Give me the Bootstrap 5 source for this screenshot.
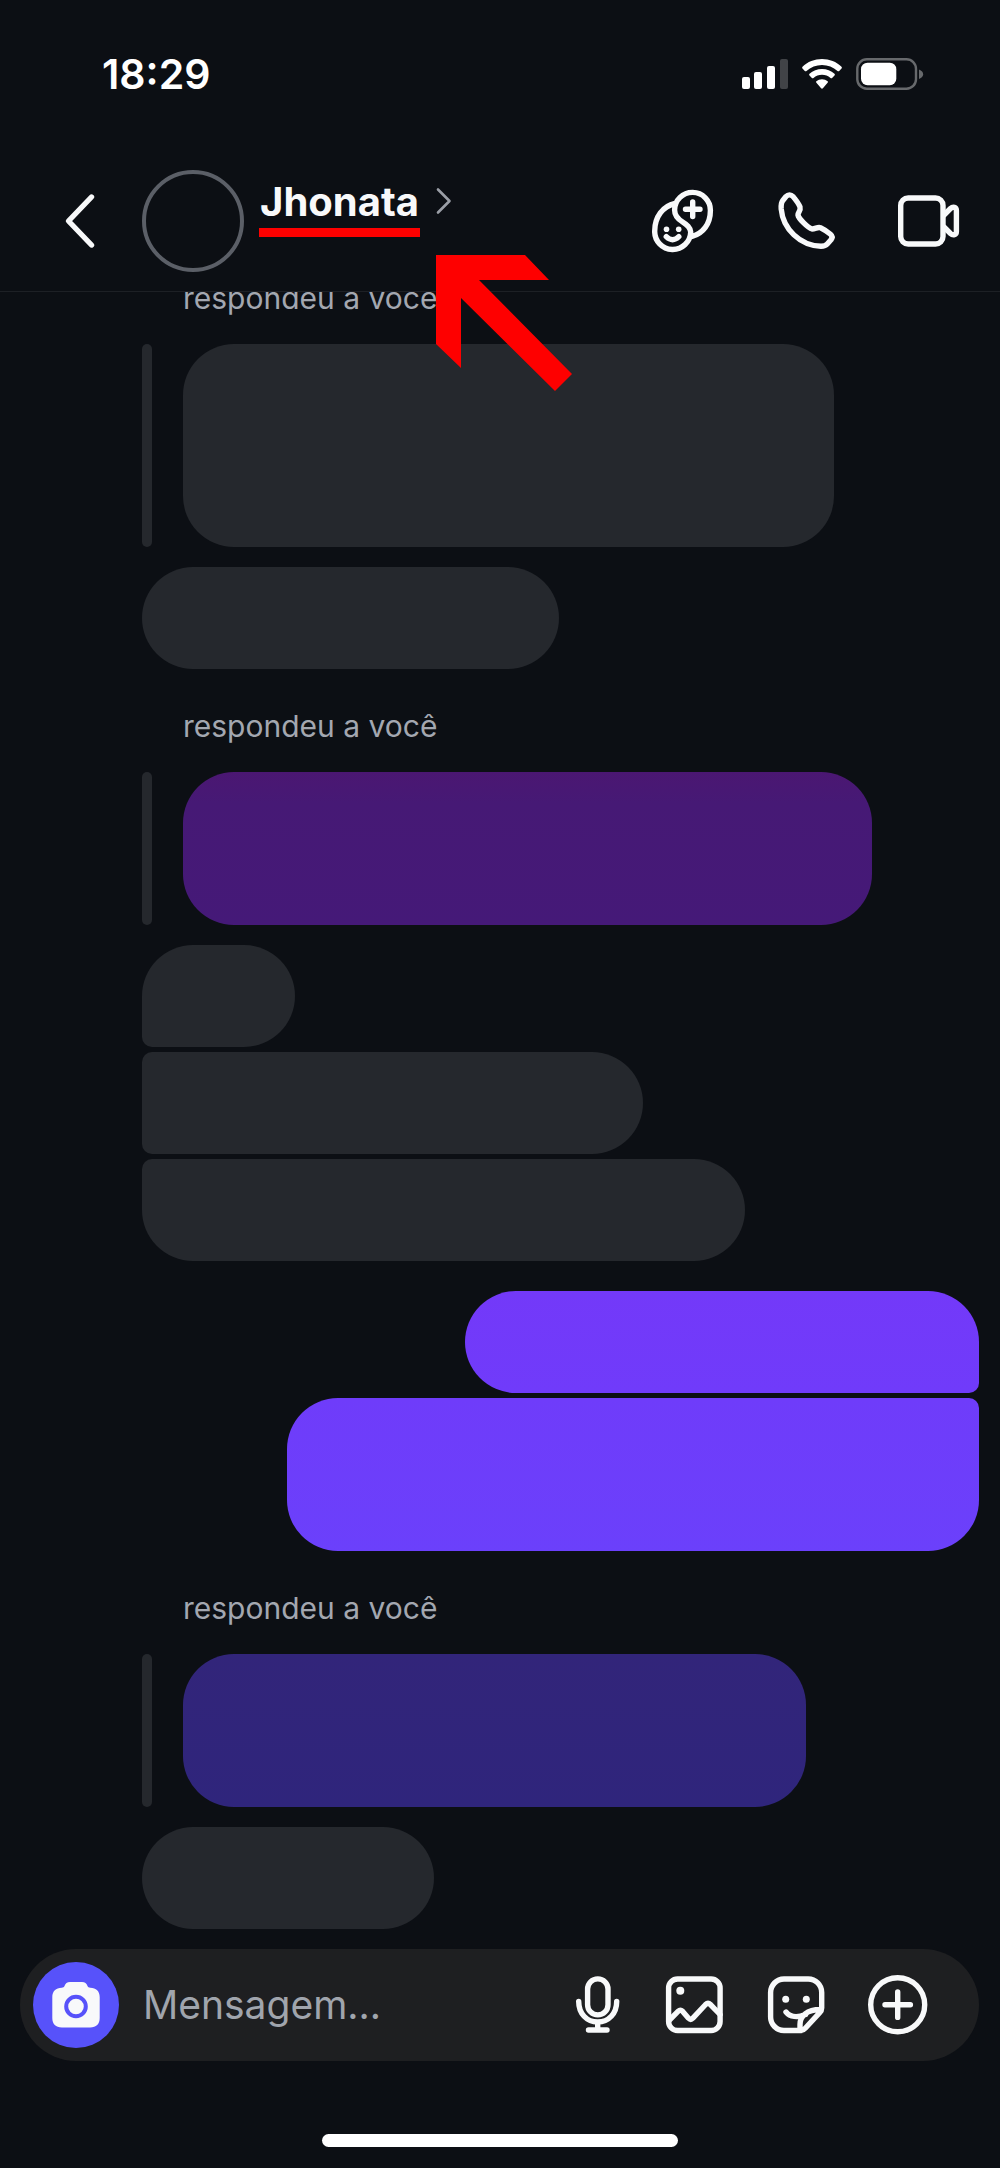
<!DOCTYPE html>
<html lang="pt-BR">
<head>
<meta charset="utf-8">
<meta name="viewport" content="width=device-width, initial-scale=1">
<title>Jhonata</title>
<link href="https://cdn.jsdelivr.net/npm/bootstrap@5.3.0/dist/css/bootstrap.min.css" rel="stylesheet">
<style>
  body { background: #0c0f14; color: #f8f9fa; font-family: Inter, "Liberation Sans", sans-serif; }
  svg { display: block; flex: none; fill: none; stroke: currentColor; stroke-width: 5.4; stroke-linecap: round; stroke-linejoin: round; }
  .solid { fill: currentColor; stroke: none; }
  .btn { --bs-btn-color: #f8f9fa; --bs-btn-hover-color: #fff; --bs-btn-active-color: #fff; }

  .status-bar { height: 150px; padding: 0 76px 2px 102px; }
  .clock { font-size: 41px; line-height: 48px; font-weight: 600; color: #fff; }
  .status-icons { gap: 14px; color: #fff; }

  .chat-header { height: 142px; padding: 0 40px 0 60px; border-bottom: 1px solid #1d2025; z-index: 2; }
  .back-btn { margin-right: 42px; }
  .avatar { width: 102px; height: 102px; border: 4px solid #5b5f67; margin-right: 15px; }
  .contact { padding-bottom: 27px; gap: 16px; color: #f8f9fa; }
  .contact-name { font-size: 40px; line-height: 48px; font-weight: 700; padding: 0 1px 2px; border-bottom: 9px solid #fe0000; }
  .contact svg { color: #9a9ea6; stroke-width: 2.6; margin-bottom: 13px; }
  .call-actions { gap: 58px; }
  .pointer-arrow { left: 436px; top: 105px; color: #fe0000; pointer-events: none; }

  .chat { padding: 0 21px 20px 142px; min-height: 0; }
  .label-reply { padding-left: 41px; margin: 35px 0 24px; font-size: 30px; line-height: 44px; color: #a3a7b0; }
  .quote { gap: 31px; margin-bottom: 20px; }
  .quote::before { content: ""; width: 10px; border-radius: 5px; background: #25282d; }
  .bubble { height: 102px; max-width: 100%; border-radius: 51px; background: #25282d; flex: none; }
  .two-lines { height: 153px; }
  .three-lines { height: 203px; }
  .stack { gap: 5px; }
  .stack .bubble:not(:last-child) { border-bottom-left-radius: 10px; }
  .stack .bubble:not(:first-child) { border-top-left-radius: 10px; }
  .stack.sent { margin-top: 30px; }
  .sent .bubble:not(:last-child) { border-bottom-left-radius: 51px; border-bottom-right-radius: 10px; background: linear-gradient(#7339f9, #703bfa); }
  .sent .bubble:not(:first-child) { border-top-left-radius: 51px; border-top-right-radius: 10px; background: linear-gradient(#6f3cfa, #6b40fb); }
  .quoted-violet { background: linear-gradient(#4b1772, #461975 20%, #451978); }
  .quoted-indigo { background: linear-gradient(#32257a, #2f257c); }

  .composer { height: 112px; margin: 0 21px 0 20px; padding: 0 51px 0 13px; border-radius: 56px; background: #1e1f21; }
  .camera-btn { width: 86px; height: 86px; background: #5752fa; margin-right: 24px; }
  .camera-btn:hover { background: #5752fa; }
  .camera-btn .ring { fill: none; stroke: #5752fa; stroke-width: 4; }
  .message-box { min-width: 0; font-size: 39px; line-height: 48px; color: #f8f9fa; background: none; }
  .message-box::placeholder { color: #a0a5ad; opacity: 1; }
  .tools { gap: 42px; }
  .home-area { height: 107px; padding-bottom: 21px; }
  .home-pill { width: 356px; height: 13px; background: #fff; }
</style>
</head>
<body>
<div class="d-flex flex-column vh-100 overflow-hidden">
  <div class="status-bar d-flex align-items-center justify-content-between flex-shrink-0">
    <span class="clock">18:29</span>
    <div class="status-icons d-flex align-items-center">
      <svg width="46" height="32" viewBox="0 0 46 32" role="img" aria-label="Sinal">
        <g class="solid"><rect y="19" width="8" height="12" rx="2"/><rect x="12" y="14" width="8" height="17" rx="2"/><rect x="25" y="8" width="8" height="23" rx="2"/><rect x="38" y="1" width="8" height="30" rx="2" opacity=".22"/></g>
      </svg>
      <svg width="40" height="32" viewBox="0 0 40 32" role="img" aria-label="Wi-Fi">
        <g class="solid"><path d="M20 1C12.600 1 5.500 3.800.500 8.700c-.500.500-.500 1.300 0 1.800l2.300 2.400c.500.500 1.200.500 1.700 0C8.700 9 14.200 6.900 20 6.900S31.300 9 35.500 12.900c.500.500 1.200.500 1.700 0l2.300-2.400c.500-.500.500-1.300 0-1.800C34.500 3.800 27.400 1 20 1z"/><path d="M20 11c-4.700 0-9.100 1.700-12.500 4.800-.500.500-.500 1.200 0 1.700l2.400 2.400c.400.400 1.100.500 1.600 0 2.400-2.100 5.300-3.200 8.500-3.200s6.100 1.100 8.500 3.200c.500.500 1.200.400 1.600 0l2.400-2.400c.500-.500.500-1.200 0-1.700C29.100 12.700 24.700 11 20 11z"/><path d="M20 21.200c-2.100 0-4.100.700-5.600 2-.500.400-.500 1 0 1.500l4.700 5.600c.5.600 1.300.6 1.800 0l4.700-5.600c.5-.500.500-1.100 0-1.500-1.500-1.300-3.500-2-5.600-2z"/></g>
      </svg>
      <svg width="68" height="32" viewBox="0 0 68 32" role="img" aria-label="Bateria">
        <rect x="1.300" y="1.300" width="58.700" height="29.400" rx="9.500" style="stroke:#67696c;stroke-width:2.4"/>
        <rect class="solid" x="5" y="4.700" width="35.300" height="22.500" rx="6.500"/>
        <path d="M63 11.500c5.500 2 5.500 7.500 0 9.500z" fill="#67696c" stroke="none"/>
      </svg>
    </div>
  </div>

  <header class="chat-header position-relative d-flex align-items-center flex-shrink-0">
    <button type="button" class="back-btn btn p-0 border-0" aria-label="Voltar">
      <svg width="40" height="56" viewBox="0 0 40 56"><path d="M31.500 4L8.500 28l23 24"/></svg>
    </button>
    <span class="avatar rounded-circle flex-shrink-0"></span>
    <a href="#" class="contact d-flex align-items-center text-decoration-none">
      <span class="contact-name">Jhonata</span>
      <svg width="16" height="28" viewBox="0 0 16 28" aria-hidden="true"><path d="M2 2.500L13.500 14 2 25.500"/></svg>
    </a>
    <div class="call-actions d-flex ms-auto">
      <button type="button" class="btn p-0 border-0" aria-label="Adicionar pessoas">
        <svg width="64" height="64" viewBox="0 0 64 64"><path d="M23 14.500C11 17 2.700 28 2.700 42a18 18 0 0 0 36 1C38.200 38 35 35.800 31 33.300 25.500 30 22.600 26.500 22.600 21a17.900 17.900 0 0 1 35.800.5C58.400 35 51 44.500 40 47.500M40.700 13v14.500M33.500 20.300H48M14.300 47.700c4 4 8.500 4 12.500 0"/><g class="solid"><circle cx="14.500" cy="40.300" r="2.800"/><circle cx="26.700" cy="40.300" r="2.800"/></g></svg>
      </button>
      <button type="button" class="btn p-0 border-0" aria-label="Ligar">
        <svg width="64" height="64" viewBox="0 0 64 64"><path d="M12 7.500L8.800 11.500C7 13.800 7 17 7.200 20 9 40 26 56.500 47 57.300c3 0 5-.8 6.500-2.500l3.500-4c1.500-2 1.300-4-.5-5.500-3.500-2.900-6.500-5-10-6.600-3-1-5 1.300-8.500 1.300C34 39 24.500 29.500 24 26c0-3.500 3-4 2-8-1.500-4-4.500-7.500-7-10.500-2-2.200-5-2.200-7 0z"/></svg>
      </button>
      <button type="button" class="btn p-0 border-0" aria-label="Chamada de vídeo">
        <svg width="64" height="64" viewBox="0 0 64 64"><rect x="4.700" y="9" width="42.300" height="46" rx="7.500"/><path d="M48 26l6.500-6.500c2.500-2.300 5.900-1.500 5.900 2v21c0 3.500-3.400 4.300-5.900 2L48 38"/></svg>
      </button>
    </div>
    <svg class="pointer-arrow position-absolute" width="136" height="136" viewBox="0 0 136 136" aria-hidden="true"><path class="solid" d="M0 0H89L113 25H43L136 119 119 136 25 43V113L0 89Z"/></svg>
  </header>

  <main class="chat d-flex flex-column flex-grow-1 justify-content-end overflow-hidden">
    <div class="label-reply">respondeu a você</div>
    <div class="quote d-flex"><div class="bubble three-lines" style="width:651px"></div></div>
    <div class="bubble" style="width:417px"></div>

    <div class="label-reply">respondeu a você</div>
    <div class="quote d-flex"><div class="bubble two-lines quoted-violet" style="width:689px"></div></div>
    <div class="stack d-flex flex-column align-items-start">
      <div class="bubble" style="width:153px"></div>
      <div class="bubble" style="width:501px"></div>
      <div class="bubble" style="width:603px"></div>
    </div>

    <div class="stack sent d-flex flex-column align-items-end">
      <div class="bubble" style="width:514px"></div>
      <div class="bubble two-lines" style="width:692px"></div>
    </div>

    <div class="label-reply">respondeu a você</div>
    <div class="quote d-flex"><div class="bubble two-lines quoted-indigo" style="width:623px"></div></div>
    <div class="bubble" style="width:292px"></div>
  </main>

  <form class="composer d-flex align-items-center flex-shrink-0">
    <button type="button" class="camera-btn btn rounded-circle border-0 p-0 d-flex align-items-center justify-content-center flex-shrink-0" aria-label="Câmera">
      <svg width="48" height="46" viewBox="0 0 48 46"><path class="solid" d="M18 0h12c3 0 4.500 1.500 5.500 4 .5 1.300 1.300 1.700 2.800 1.700 5.800 0 9.400 3.500 9.400 9.300v21c0 6-3.500 9.500-9.500 9.500H9.800C3.800 45.500.3 42 .3 36V15c0-5.800 3.600-9.300 9.400-9.300 1.500 0 2.300-.4 2.800-1.700C13.500 1.500 15 0 18 0z"/><circle class="ring" cx="24" cy="24.500" r="9.800"/></svg>
    </button>
    <input type="text" class="message-box flex-grow-1 border-0 p-0" placeholder="Mensagem..." aria-label="Mensagem">
    <div class="tools d-flex">
      <button type="button" class="btn p-0 border-0" aria-label="Gravar áudio">
        <svg width="60" height="60" viewBox="0 0 60 60"><rect x="25.600" y="3.900" width="20.400" height="36" rx="10.200"/><path d="M16.700 26.500c0 12 8 20.500 19 20.500s19-8.500 19-20.500M35.700 48v7M26.500 55H45"/></svg>
      </button>
      <button type="button" class="btn p-0 border-0" aria-label="Galeria">
        <svg width="60" height="60" viewBox="0 0 60 60"><rect x="4.600" y="4" width="51.500" height="51.500" rx="9"/><path d="M5.500 45l8.800-8.800c1.500-1.500 2.700-1.500 4.200 0l6 7c1.500 1.500 2.900 1.500 4.400 0L41.600 29.500c1.700-1.700 3.100-1.700 4.800 0L56 39.500"/><circle class="solid" cx="16.300" cy="15.700" r="4"/></svg>
      </button>
      <button type="button" class="btn p-0 border-0" aria-label="Figurinhas">
        <svg width="60" height="60" viewBox="0 0 60 60"><path d="M35 55.500H18A13.500 13.500 0 0 1 4.600 42V17.500A13.500 13.500 0 0 1 18 4h24.200a13.500 13.500 0 0 1 13.500 13.500V33c0 2-.6 3.300-2 4.700L39.500 53c-1.500 1.700-2.700 2.500-4.500 2.500zM34 54.500v-5c0-8.500 7-15 20.500-15M20 37c4 5 11.500 6 19.500 2.500"/><g class="solid"><circle cx="19.700" cy="24.300" r="3.500"/><circle cx="40.300" cy="24.300" r="3.500"/></g></svg>
      </button>
      <button type="button" class="btn p-0 border-0" aria-label="Mais opções">
        <svg width="60" height="60" viewBox="0 0 60 60"><circle cx="29.700" cy="29.700" r="27"/><path d="M29.700 17v25.400M17 29.700h25.400"/></svg>
      </button>
    </div>
  </form>

  <div class="home-area d-flex justify-content-center align-items-end flex-shrink-0">
    <div class="home-pill rounded-pill"></div>
  </div>
</div>
<script src="https://cdn.jsdelivr.net/npm/bootstrap@5.3.0/dist/js/bootstrap.bundle.min.js"></script>
</body>
</html>
